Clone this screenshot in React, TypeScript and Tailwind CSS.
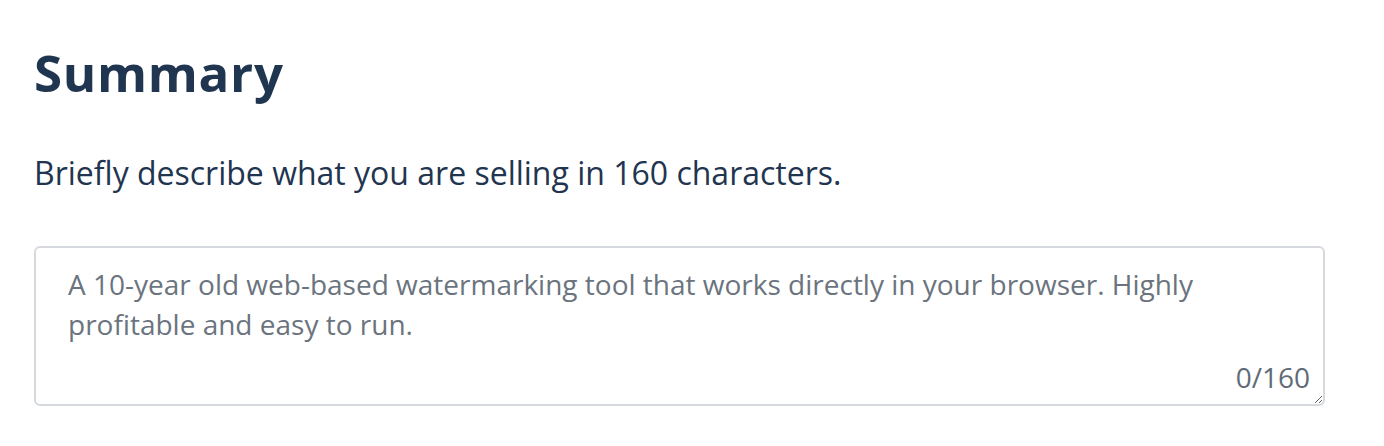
import React, { useState } from "react";

export default function App() {
  const [text, setText] = useState("");
  const max = 160;

  return (
    <div
      className="min-h-[446px] bg-white pl-[34px] pr-[59px] pt-[40px] text-[#1f3550]"
      style={{ fontFamily: '"Open Sans", "Noto Sans", sans-serif' }}
    >
      <h1 className="text-[51px] font-bold leading-[64px] tracking-[0.7px]">Summary</h1>
      <p className="mt-[47px] text-[32px] leading-[44px]">
        Briefly describe what you are selling in 160 characters.
      </p>
      <div className="relative mt-[51px]">
        <textarea
          value={text}
          maxLength={max}
          onChange={(e) => setText(e.target.value)}
          placeholder="A 10-year old web-based watermarking tool that works directly in your browser. Highly profitable and easy to run."
          className="block h-[160px] w-full resize-y rounded-[6px] border-2 border-[#d6dade] px-[32px] py-[16px] text-[28px] leading-[40px] text-[#1f3550] outline-none placeholder:text-[#6b747e]"
        />
        <span className="pointer-events-none absolute bottom-[13px] right-[15px] text-[28px] leading-[32px] text-[#5f6b78]">
          {text.length}/{max}
        </span>
      </div>
    </div>
  );
}
